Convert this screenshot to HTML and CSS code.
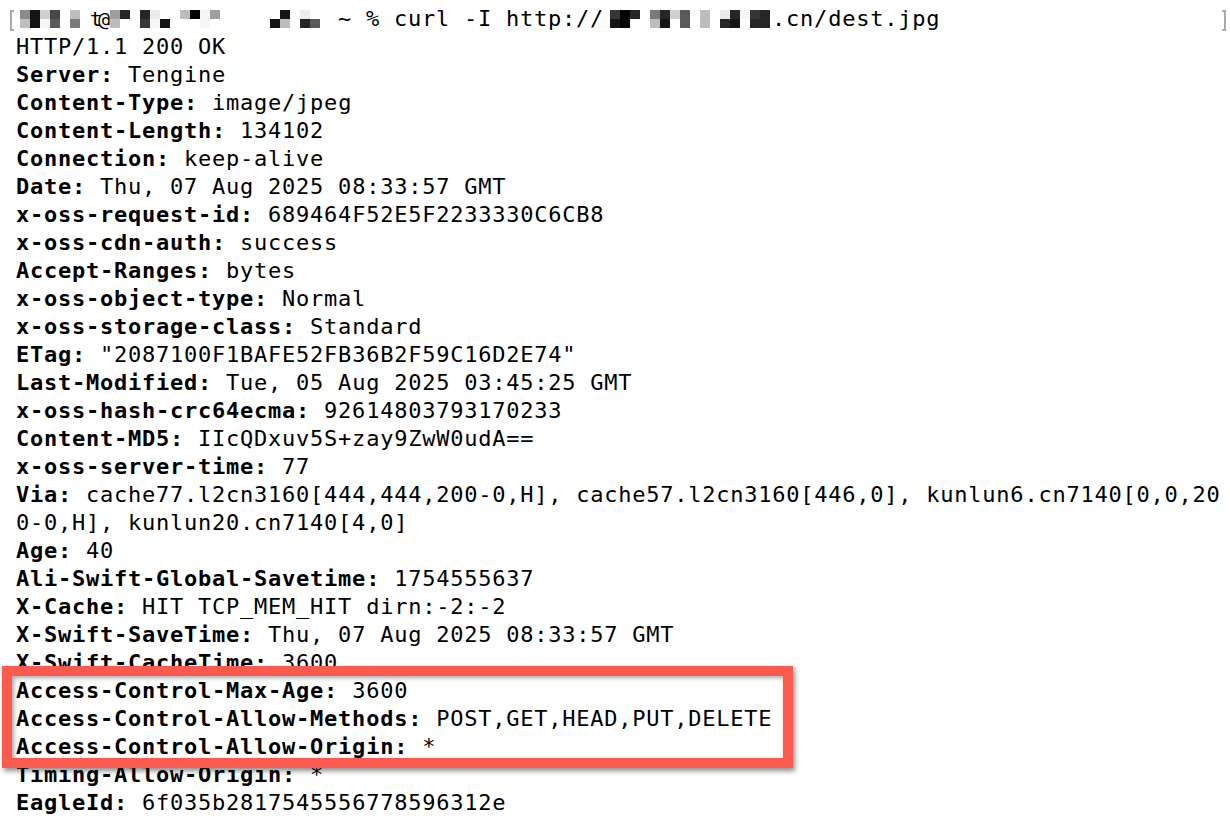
FILE: index.html
```html
<!DOCTYPE html>
<html lang="en">
<head>
<meta charset="utf-8">
<title>curl -I</title>
<link rel="stylesheet" href="styles.css">
</head>
<body>
<div class="term">
  <div class="line prompt"><span class="mark-l"></span><span class="mosaic m1"><i class="c"><b class="s8"></b><b class="sb"></b></i><i class="c"><b class="s1"></b><b class="s1"></b></i><i class="c"><b class="sc"></b><b class="sf"></b></i><i class="c"><b class="s4"></b><b class="s5"></b></i><i class="c"><b></b><b></b></i><i class="c"><b class="sb"></b><b class="s7"></b></i><i class="c"><b></b><b></b></i><span class="at">t@</span><i class="c"><b class="s9"></b><b class="sb"></b></i><i class="c"><b class="s2"></b><b></b></i><i class="c"><b></b><b></b></i><i class="c"><b class="s2"></b><b class="s3"></b></i><i class="c"><b class="se"></b><b class="sf"></b></i><i class="c"><b></b><b class="s1"></b></i><i class="c"><b></b><b></b></i><i class="c"><b class="sb"></b><b></b></i><i class="c"><b class="s0"></b><b></b></i><i class="c"><b class="sf"></b><b class="sf"></b></i><i class="c"><b class="s9"></b><b></b></i><i class="c"><b></b><b></b></i><i class="c"><b></b><b></b></i><i class="c"><b></b><b></b></i><i class="c"><b></b><b></b></i><i class="c"><b></b><b></b></i><i class="c"><b></b><b class="s1"></b></i><i class="c"><b class="s1"></b><b class="sb"></b></i><i class="c"><b></b><b></b></i><i class="c"><b class="se"></b><b class="s2"></b></i><i class="c"><b></b><b class="s5"></b></i></span><span class="txt">~ % curl -I http://</span><span class="mosaic m2"><i class="c"><b class="s3"></b><b class="s1"></b></i><i class="c"><b class="s0"></b><b class="s0"></b></i><i class="c"><b class="s2"></b><b></b></i><i class="c"><b></b><b></b></i><i class="c"><b class="s7"></b><b class="sb"></b></i><i class="c"><b class="s2"></b><b class="s1"></b></i><i class="c"><b class="sc"></b><b></b></i><i class="c"><b class="s5"></b><b class="s5"></b></i><i class="c"><b></b><b></b></i><i class="c"><b class="sb"></b><b class="sb"></b></i><i class="c"><b></b><b></b></i><i class="c"><b class="se"></b><b class="s2"></b></i><i class="c"><b class="s2"></b><b class="s1"></b></i><i class="c"><b class="sf"></b><b></b></i><i class="c"><b class="s3"></b><b class="s2"></b></i><i class="c"><b class="s2"></b><b class="s2"></b></i></span><span class="txt">.cn/dest.jpg</span><span class="mark-r"></span></div>
  <div class="line">HTTP/1.1 200 OK</div>
  <div class="line"><b>Server:</b> Tengine</div>
  <div class="line"><b>Content-Type:</b> image/jpeg</div>
  <div class="line"><b>Content-Length:</b> 134102</div>
  <div class="line"><b>Connection:</b> keep-alive</div>
  <div class="line"><b>Date:</b> Thu, 07 Aug 2025 08:33:57 GMT</div>
  <div class="line"><b>x-oss-request-id:</b> 689464F52E5F2233330C6CB8</div>
  <div class="line"><b>x-oss-cdn-auth:</b> success</div>
  <div class="line"><b>Accept-Ranges:</b> bytes</div>
  <div class="line"><b>x-oss-object-type:</b> Normal</div>
  <div class="line"><b>x-oss-storage-class:</b> Standard</div>
  <div class="line"><b>ETag:</b> "2087100F1BAFE52FB36B2F59C16D2E74"</div>
  <div class="line"><b>Last-Modified:</b> Tue, 05 Aug 2025 03:45:25 GMT</div>
  <div class="line"><b>x-oss-hash-crc64ecma:</b> 92614803793170233</div>
  <div class="line"><b>Content-MD5:</b> IIcQDxuv5S+zay9ZwW0udA==</div>
  <div class="line"><b>x-oss-server-time:</b> 77</div>
  <div class="line"><b>Via:</b> cache77.l2cn3160[444,444,200-0,H], cache57.l2cn3160[446,0], kunlun6.cn7140[0,0,20</div>
  <div class="line">0-0,H], kunlun20.cn7140[4,0]</div>
  <div class="line"><b>Age:</b> 40</div>
  <div class="line"><b>Ali-Swift-Global-Savetime:</b> 1754555637</div>
  <div class="line"><b>X-Cache:</b> HIT TCP_MEM_HIT dirn:-2:-2</div>
  <div class="line"><b>X-Swift-SaveTime:</b> Thu, 07 Aug 2025 08:33:57 GMT</div>
  <div class="line"><b>X-Swift-CacheTime:</b> 3600</div>
  <div class="line"><b>Access-Control-Max-Age:</b> 3600</div>
  <div class="line"><b>Access-Control-Allow-Methods:</b> POST,GET,HEAD,PUT,DELETE</div>
  <div class="line"><b>Access-Control-Allow-Origin:</b> *</div>
  <div class="line"><b>Timing-Allow-Origin:</b> *</div>
  <div class="line"><b>EagleId:</b> 6f035b2817545556778596312e</div>
  <div class="highlight"></div>
</div>
</body>
</html>
```

FILE: styles.css
```css
html, body {
  margin: 0;
  padding: 0;
  background: #ffffff;
}

.term {
  position: relative;
  width: 1230px;
  height: 830px;
  box-sizing: border-box;
  padding: 5px 0 0 16px;
  font-family: "DejaVu Sans Mono", "Liberation Mono", monospace;
  font-size: 22px;
  letter-spacing: 0.76px;
  color: #000;
  overflow: hidden;
}

.line {
  height: 28px;
  line-height: 28px;
  white-space: pre;
}

.line b {
  font-weight: bold;
}

.prompt {
  display: flex;
  align-items: flex-start;
  margin-left: -6px;
}

.txt {
  white-space: pre;
}

.mark-l,
.mark-r {
  flex: none;
  width: 2px;
  height: 17px;
  margin-top: 5px;
  border: 2px solid #a9a9a9;
  box-sizing: content-box;
}

.mark-l {
  border-right: none;
  margin-right: 2px;
}

.mark-r {
  border-left: none;
  margin-left: auto;
  margin-right: 4px;
}

.mosaic {
  flex: none;
  display: flex;
  height: 28px;
  padding-top: 5px;
  box-sizing: border-box;
}

.m1 {
  width: 322px;
  padding-left: 4px;
}

.m2 {
  width: 168px;
  padding-left: 6px;
}

.c {
  display: flex;
  flex-direction: column;
  width: 10px;
}

.c b {
  display: block;
  width: 10px;
  height: 9px;
}

.at {
  width: 20px;
  line-height: 28px;
  margin-top: -5px;
  letter-spacing: -4px;
  font-size: 20px;
}

.s0 { background: #050505; }
.s1 { background: #151515; }
.s2 { background: #262626; }
.s3 { background: #363636; }
.s4 { background: #474747; }
.s5 { background: #5a5a5a; }
.s7 { background: #7a7a7a; }
.s8 { background: #8a8a8a; }
.s9 { background: #9e9e9e; }
.sb { background: #bdbdbd; }
.sc { background: #d0d0d0; }
.se { background: #ececec; }
.sf { background: #f6f6f6; }

.highlight {
  position: absolute;
  left: 2px;
  top: 666px;
  width: 771px;
  height: 82px;
  border: 10px solid #fd5a4f;
  box-shadow: 2px 3px 5px rgba(0, 0, 0, 0.45), inset 2px 2px 4px rgba(0, 0, 0, 0.35);
}
```
